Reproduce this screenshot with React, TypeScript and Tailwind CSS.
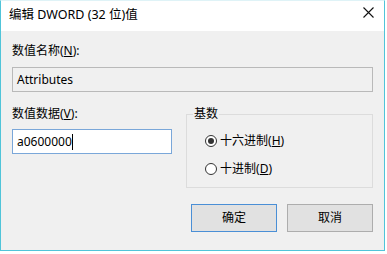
import React from "react";

const font = { fontFamily: '"Noto Sans", "Noto Sans CJK SC", sans-serif' };

function Radio({ checked, label, u }: { checked?: boolean; label: string; u: string }) {
  return (
    <div className="flex items-center h-[16px] leading-[16px]">
      <div className="w-[12px] h-[12px] rounded-full border border-[#333333] bg-white flex items-center justify-center">
        {checked && <div className="w-[6px] h-[6px] rounded-full bg-[#333333]" />}
      </div>
      <span className="ml-[3px]">
        {label}(<span className="underline">{u}</span>)
      </span>
    </div>
  );
}

export default function App() {
  return (
    <div className="w-[387px] h-[254px] bg-white text-[12px] text-black" style={font}>
      <div className="w-[385px] h-[251px] border border-[#50c4d9] border-t-[#dff3f7] flex flex-col bg-[#f0f0f0]">
        <div className="h-[30px] bg-white flex items-center justify-between pl-[8px] pr-[10px]">
          <span className="leading-[16px] text-[12.5px] -mt-[2px]">编辑 DWORD (32 位)值</span>
          <svg width="11" height="11" viewBox="0 0 11 11" className="-mt-[7px]">
            <path d="M0.5 0.5 L10.5 10.5 M10.5 0.5 L0.5 10.5" stroke="#111" strokeWidth="1.1" />
          </svg>
        </div>
        <div className="flex-1 px-[11px] pt-[12px] flex flex-col">
          <div className="h-[16px] leading-[16px]">
            数值名称(<span className="underline">N</span>):
          </div>
          <div className="mt-[8px] h-[25px] w-[361px] border border-[#b9b9b9] bg-[#f0f0f0] flex items-center px-[4px] leading-[16px]">
            Attributes
          </div>
          <div className="mt-[14px] flex gap-[14px]">
            <div className="w-[161px] flex flex-col">
              <div className="h-[16px] leading-[16px]">
                数值数据(<span className="underline">V</span>):
              </div>
              <div className="mt-[7px] h-[25px] border border-[#7aa7d9] bg-white flex items-center px-[4px] leading-[16px]">
                <span>a0600000</span>
                <span className="w-[1px] h-[16px] bg-black" />
              </div>
            </div>
            <fieldset className="w-[188px] h-[82px] border border-[#dcdcdc]">
              <legend className="ml-[6px] px-[1px] leading-[16px]">基数</legend>
              <div className="pl-[18px] pt-[11px] flex flex-col gap-[12px]">
                <Radio checked label="十六进制" u="H" />
                <Radio label="十进制" u="D" />
              </div>
            </fieldset>
          </div>
          <div className="mt-[16px] flex justify-end gap-[10px]">
            <button className="w-[86px] h-[28px] border border-[#4a8fd6] bg-[#e1e1e1] leading-[16px]">确定</button>
            <button className="w-[86px] h-[28px] border border-[#adadad] bg-[#e1e1e1] leading-[16px]">取消</button>
          </div>
        </div>
      </div>
    </div>
  );
}
